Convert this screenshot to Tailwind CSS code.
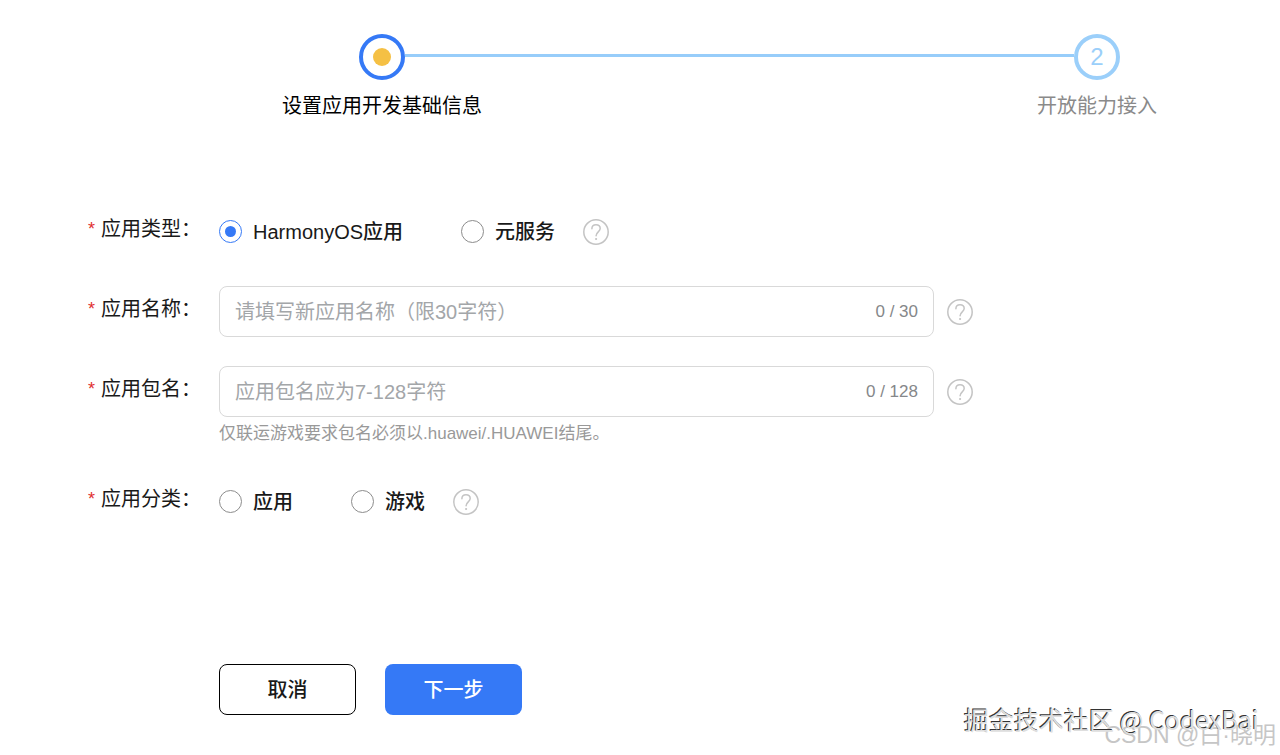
<!doctype html>
<html lang="zh-CN">
	<head>
		<meta charset="UTF-8">
		<meta content="width=device-width, initial-scale=1" name="viewport">
		<title>设置应用开发基础信息</title>
		<script src="https://cdn.jsdelivr.net/npm/@tailwindcss/browser@4"></script>
	</head>
	<body class="relative min-h-screen overflow-x-hidden bg-white font-['Liberation_Sans','Noto_Sans_CJK_SC',sans-serif] text-[20px] leading-7 text-[#191919]">
		<!-- 步骤条 -->
		<ol class="flex items-start pt-[34px] pl-[282px] pr-[83px]">
			<li class="flex w-[200px] shrink-0 flex-col items-center gap-3 text-black">
				<span class="flex size-[46px] items-center justify-center rounded-full border-4 border-[#3579f6]">
					<span class="size-[18px] rounded-full bg-[#f5c044]"></span>
				</span>
				<span>设置应用开发基础信息</span>
			</li>
			<li aria-hidden="true" class="mt-5 -mx-[77px] h-[3px] flex-1 bg-[#97cdfa]"></li>
			<li class="flex w-[200px] shrink-0 flex-col items-center gap-3 text-[#8a8a8a]">
				<span class="flex size-[46px] items-center justify-center rounded-full border-4 border-[#9bcffa] text-[24px] text-[#9bcffa]">2</span>
				<span>开放能力接入</span>
			</li>
		</ol>

		<!-- 表单 -->
		<form class="mt-[86px] flex flex-col gap-[29px] px-[88px] pb-10">
			<div aria-labelledby="typeLabel" class="flex" role="radiogroup">
				<div class="flex w-[131px] shrink-0 gap-[6px] pt-[9px]" id="typeLabel">
					<span class="text-[18px] text-[#e02f2f]">*</span>应用类型：
				</div>
				<div class="flex h-[51px] items-center">
					<label class="mr-[58px] flex items-center gap-[11px] font-medium">
						<input checked class="size-[23px] appearance-none rounded-full border border-[#8c8c8c] p-[5px] bg-clip-content checked:border-[#3579f6] checked:bg-[#3579f6]" name="appType" type="radio">
						HarmonyOS应用
					</label>
					<label class="mr-7 flex items-center gap-[11px] font-medium">
						<input class="size-[23px] appearance-none rounded-full border border-[#8c8c8c] p-[5px] bg-clip-content checked:border-[#3579f6] checked:bg-[#3579f6]" name="appType" type="radio">
						元服务
					</label>
					<button aria-label="帮助" class="text-[#c4c4c4]" type="button">
						<svg class="size-[26px]" fill="none" stroke="currentColor" stroke-linecap="round" stroke-width="1.5" viewBox="0 0 26 26">
							<circle cx="13" cy="13" r="12.2"/>
							<path d="M8.9 9.8C8.9 7.3 10.6 5.8 13 5.8s4.2 1.5 4.2 3.8c0 3.1-4.1 3.5-4.1 7.1"/>
							<circle cx="13.1" cy="20" fill="currentColor" r="1.1" stroke="none"/>
						</svg>
					</button>
				</div>
			</div>

			<div class="flex">
				<label class="flex w-[131px] shrink-0 gap-[6px] pt-[9px]" for="appName">
					<span class="text-[18px] text-[#e02f2f]">*</span>应用名称：
				</label>
				<div class="flex flex-1 items-center gap-[13px]">
					<div class="flex h-[51px] w-full max-w-[715px] items-center rounded-lg border border-[#d9d9d9] px-[15px]">
						<input class="min-w-0 flex-1 outline-none placeholder:text-[#a3a6a9]" id="appName" maxlength="30" placeholder="请填写新应用名称（限30字符）" type="text">
						<span class="text-[17px] text-[#85878a]">0 / 30</span>
					</div>
					<button aria-label="帮助" class="text-[#c4c4c4]" type="button">
						<svg class="size-[26px]" fill="none" stroke="currentColor" stroke-linecap="round" stroke-width="1.5" viewBox="0 0 26 26">
							<circle cx="13" cy="13" r="12.2"/>
							<path d="M8.9 9.8C8.9 7.3 10.6 5.8 13 5.8s4.2 1.5 4.2 3.8c0 3.1-4.1 3.5-4.1 7.1"/>
							<circle cx="13.1" cy="20" fill="currentColor" r="1.1" stroke="none"/>
						</svg>
					</button>
				</div>
			</div>

			<div class="flex">
				<label class="flex w-[131px] shrink-0 gap-[6px] pt-[9px]" for="packageName">
					<span class="text-[18px] text-[#e02f2f]">*</span>应用包名：
				</label>
				<div class="flex-1">
					<div class="flex items-center gap-[13px]">
						<div class="flex h-[51px] w-full max-w-[715px] items-center rounded-lg border border-[#d9d9d9] px-[15px]">
							<input aria-describedby="packageHint" class="min-w-0 flex-1 outline-none placeholder:text-[#a3a6a9]" id="packageName" maxlength="128" placeholder="应用包名应为7-128字符" type="text">
							<span class="text-[17px] text-[#85878a]">0 / 128</span>
						</div>
						<button aria-label="帮助" class="text-[#c4c4c4]" type="button">
							<svg class="size-[26px]" fill="none" stroke="currentColor" stroke-linecap="round" stroke-width="1.5" viewBox="0 0 26 26">
								<circle cx="13" cy="13" r="12.2"/>
								<path d="M8.9 9.8C8.9 7.3 10.6 5.8 13 5.8s4.2 1.5 4.2 3.8c0 3.1-4.1 3.5-4.1 7.1"/>
								<circle cx="13.1" cy="20" fill="currentColor" r="1.1" stroke="none"/>
							</svg>
						</button>
					</div>
					<p class="pt-1 text-[17px] leading-[26px] text-[#999999]" id="packageHint">仅联运游戏要求包名必须以.huawei/.HUAWEI结尾。</p>
				</div>
			</div>

			<div aria-labelledby="categoryLabel" class="flex" role="radiogroup">
				<div class="flex w-[131px] shrink-0 gap-[6px] pt-[9px]" id="categoryLabel">
					<span class="text-[18px] text-[#e02f2f]">*</span>应用分类：
				</div>
				<div class="flex h-[51px] items-center">
					<label class="mr-[58px] flex items-center gap-[11px] font-medium">
						<input class="size-[23px] appearance-none rounded-full border border-[#8c8c8c] p-[5px] bg-clip-content checked:border-[#3579f6] checked:bg-[#3579f6]" name="category" type="radio">
						应用
					</label>
					<label class="mr-7 flex items-center gap-[11px] font-medium">
						<input class="size-[23px] appearance-none rounded-full border border-[#8c8c8c] p-[5px] bg-clip-content checked:border-[#3579f6] checked:bg-[#3579f6]" name="category" type="radio">
						游戏
					</label>
					<button aria-label="帮助" class="text-[#c4c4c4]" type="button">
						<svg class="size-[26px]" fill="none" stroke="currentColor" stroke-linecap="round" stroke-width="1.5" viewBox="0 0 26 26">
							<circle cx="13" cy="13" r="12.2"/>
							<path d="M8.9 9.8C8.9 7.3 10.6 5.8 13 5.8s4.2 1.5 4.2 3.8c0 3.1-4.1 3.5-4.1 7.1"/>
							<circle cx="13.1" cy="20" fill="currentColor" r="1.1" stroke="none"/>
						</svg>
					</button>
				</div>
			</div>

			<!-- 按钮组 -->
			<div class="mt-[108px] ml-[131px] flex gap-[29px] font-medium">
				<button class="h-[51px] w-[137px] rounded-lg border border-black" type="button">取消</button>
				<button class="h-[51px] w-[137px] rounded-lg bg-[#3579f6] text-white" type="submit">下一步</button>
			</div>
		</form>

		<!-- 水印 -->
		<div class="pointer-events-none absolute right-1 bottom-0 text-[23px] leading-10 whitespace-nowrap text-[#c6c6c6]">CSDN @白·晓明</div>
		<div class="pointer-events-none absolute right-[21px] bottom-4 font-['Noto_Sans_CJK_SC',sans-serif] text-[25px] leading-10 whitespace-nowrap text-[#dedede] [text-shadow:-1px_-1px_0_#333333]">掘金技术社区 @ CodexBai</div>
	</body>
</html>
